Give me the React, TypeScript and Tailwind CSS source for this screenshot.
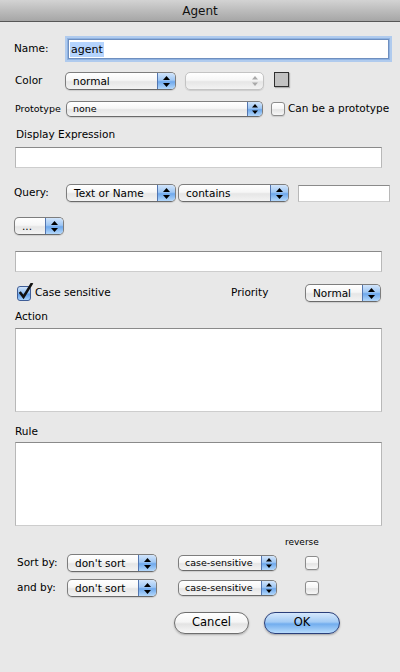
import React from "react";

function Arrows({ color = "#000", small = false }: { color?: string; small?: boolean }) {
  const w = small ? 6 : 7;
  const h = small ? 10 : 11;
  return (
    <svg width={w} height={h} viewBox={`0 0 ${w} ${h}`}>
      <polygon points={`${w / 2},0 0,${small ? 3.5 : 4} ${w},${small ? 3.5 : 4}`} fill={color} />
      <polygon points={`0,${h - (small ? 3.5 : 4)} ${w},${h - (small ? 3.5 : 4)} ${w / 2},${h}`} fill={color} />
    </svg>
  );
}

function Popup({
  text,
  className,
  small = false,
  disabled = false,
}: {
  text: string;
  className: string;
  small?: boolean;
  disabled?: boolean;
}) {
  return (
    <div
      className={`flex overflow-hidden rounded-[5px] border ${
        disabled ? "border-[#c3c3c3]" : "border-[#7d7d7d] border-b-[#6a6a6a]"
      } bg-[linear-gradient(to_bottom,#ffffff_0%,#f6f6f6_45%,#e6e6e6_55%,#f3f3f3_100%)] shadow-[0_1px_1px_rgba(0,0,0,0.12)] ${className}`}
    >
      <div
        className={`flex flex-1 items-center ${small ? "pl-[6px] text-[9.5px]" : "pl-[7px] text-[10.5px]"} leading-none text-black`}
      >
        {text}
      </div>
      {disabled ? (
        <div className="flex w-[17px] items-center justify-center">
          <Arrows color="#a9a9a9" small />
        </div>
      ) : (
        <div
          className={`flex ${small ? "w-[15px]" : "w-[18px]"} items-center justify-center border-l border-[#5376b0] bg-[linear-gradient(to_bottom,#d2e5fb_0%,#9fc7f4_45%,#6ea8ec_55%,#b4d8fb_100%)]`}
        >
          <Arrows small={small} />
        </div>
      )}
    </div>
  );
}

function Field({ className }: { className: string }) {
  return (
    <div
      className={`border border-[#b8b8b8] border-t-[#8a8a8a] border-b-[#cdcdcd] bg-white ${className}`}
    />
  );
}

function CheckBox({ checked = false }: { checked?: boolean }) {
  if (checked) {
    return (
      <div className="relative h-[15px] w-[14px] shrink-0">
        <div className="h-[15px] w-[14px] rounded-[3px] border border-[#3f5d96] bg-[linear-gradient(to_bottom,#cfe3fa_0%,#93c0f2_45%,#5f9ee9_55%,#a8d2fb_100%)]" />
        <svg className="absolute left-[1px] top-[-3px]" width="16" height="17" viewBox="0 0 16 17">
          <path d="M2.5 10 L5.5 14 L13.5 1" fill="none" stroke="#111" strokeWidth="2.6" strokeLinecap="square" />
        </svg>
      </div>
    );
  }
  return (
    <div className="h-[14px] w-[14px] shrink-0 rounded-[3px] border border-[#8c8c8c] bg-[linear-gradient(to_bottom,#ffffff_0%,#f4f4f4_50%,#e4e4e4_55%,#f7f7f7_100%)] shadow-[0_1px_1px_rgba(0,0,0,0.12)]" />
  );
}

export default function App() {
  return (
    <div className="min-h-[672px] w-[400px] bg-[#e8e8e8] font-['DejaVu_Sans',sans-serif] text-black">
      {/* Title bar */}
      <div className="flex h-[22px] items-center justify-center border-b border-[#575757] bg-[linear-gradient(to_bottom,#d3d3d3_0%,#bcbcbc_50%,#a6a6a6_100%)] text-[12px] leading-none text-[#111]">
        Agent
      </div>

      {/* Name */}
      <div className="mt-[17px] flex h-[20px] items-center">
        <div className="ml-[14px] w-[54px] text-[10.5px]">Name:</div>
        <div className="flex h-[20px] w-[321px] items-center border border-[#6f8fbf] bg-white shadow-[0_0_0_1px_#8fb3e2,0_0_0_3px_#b0cbee]">
          <span className="ml-[1px] bg-[#b5d4fd] px-[1px] text-[11px] leading-[15px]">agent</span>
        </div>
      </div>

      {/* Color */}
      <div className="mt-[13px] flex h-[18px] items-center">
        <div className="ml-[15px] w-[50px] text-[10.5px]">Color</div>
        <Popup text="normal" className="h-[18px] w-[111px]" />
        <Popup text="" disabled className="ml-[9px] h-[18px] w-[79px]" />
        <div className="ml-[10px] h-[15px] w-[15px] self-start border border-[#2f2f2f] bg-[#c2c2c2] shadow-[1px_1px_1px_rgba(0,0,0,0.25)]" />
      </div>

      {/* Prototype */}
      <div className="mt-[11px] flex h-[16px] items-center">
        <div className="ml-[15px] w-[51px] text-[9.5px]">Prototype</div>
        <Popup text="none" small className="h-[16px] w-[197px]" />
        <div className="ml-[8px]">
          <CheckBox />
        </div>
        <div className="ml-[3px] text-[10.5px]">Can be a prototype</div>
      </div>

      {/* Display Expression */}
      <div className="ml-[16px] mt-[10px] h-[14px] text-[10.5px] leading-[14px]">Display Expression</div>
      <Field className="ml-[15px] mt-[6px] h-[21px] w-[367px]" />

      {/* Query */}
      <div className="mt-[16px] flex h-[18px] items-center">
        <div className="ml-[14px] w-[52px] text-[10.5px]">Query:</div>
        <Popup text="Text or Name" className="h-[18px] w-[110px]" />
        <Popup text="contains" className="ml-[2px] h-[18px] w-[111px]" />
        <Field className="ml-[9px] h-[17px] w-[92px]" />
      </div>

      {/* ... popup */}
      <div className="mt-[15px] flex h-[18px]">
        <Popup text="..." className="ml-[14px] h-[18px] w-[50px]" />
      </div>

      <Field className="ml-[15px] mt-[16px] h-[21px] w-[367px]" />

      {/* Case sensitive / Priority */}
      <div className="mt-[12px] flex h-[18px] items-center">
        <div className="ml-[17px]">
          <CheckBox checked />
        </div>
        <div className="ml-[4px] w-[196px] text-[10.5px]">Case sensitive</div>
        <div className="w-[74px] text-[10.5px]">Priority</div>
        <Popup text="Normal" className="h-[18px] w-[76px]" />
      </div>

      {/* Action */}
      <div className="ml-[15px] mt-[7px] h-[14px] text-[10.5px] leading-[14px]">Action</div>
      <Field className="ml-[15px] mt-[5px] h-[84px] w-[367px]" />

      {/* Rule */}
      <div className="ml-[15px] mt-[12px] h-[14px] text-[10.5px] leading-[14px]">Rule</div>
      <Field className="ml-[15px] mt-[4px] h-[84px] w-[367px]" />

      {/* reverse */}
      <div className="ml-[285px] mt-[10px] h-[12px] text-[9px] leading-[12px]">reverse</div>

      {/* Sort by */}
      <div className="mt-[6px] flex h-[18px] items-center">
        <div className="ml-[17px] w-[50px] text-[10.5px]">Sort by:</div>
        <Popup text="don't sort" className="h-[18px] w-[90px]" />
        <Popup text="case-sensitive" small className="ml-[21px] h-[16px] w-[99px]" />
        <div className="ml-[28px]">
          <CheckBox />
        </div>
      </div>

      {/* and by */}
      <div className="mt-[7px] flex h-[18px] items-center">
        <div className="ml-[17px] w-[50px] text-[10.5px]">and by:</div>
        <Popup text="don't sort" className="h-[18px] w-[90px]" />
        <Popup text="case-sensitive" small className="ml-[21px] h-[16px] w-[99px]" />
        <div className="ml-[28px]">
          <CheckBox />
        </div>
      </div>

      {/* Buttons */}
      <div className="mt-[15px] flex h-[22px]">
        <div className="ml-[174px] flex h-[22px] w-[75px] items-center justify-center rounded-full border border-[#6e6e6e] bg-[linear-gradient(to_bottom,#ffffff_0%,#f5f5f5_45%,#e3e3e3_55%,#f8f8f8_100%)] text-[11.5px] leading-none shadow-[0_1px_2px_rgba(0,0,0,0.25)]">
          Cancel
        </div>
        <div className="ml-[15px] flex h-[22px] w-[76px] items-center justify-center rounded-full border border-[#2a3f7a] bg-[linear-gradient(to_bottom,#d6e8fc_0%,#a3cbf5_45%,#72adee_55%,#b8dcfc_100%)] text-[11.5px] leading-none shadow-[0_1px_2px_rgba(0,0,0,0.3)]">
          OK
        </div>
      </div>
    </div>
  );
}
